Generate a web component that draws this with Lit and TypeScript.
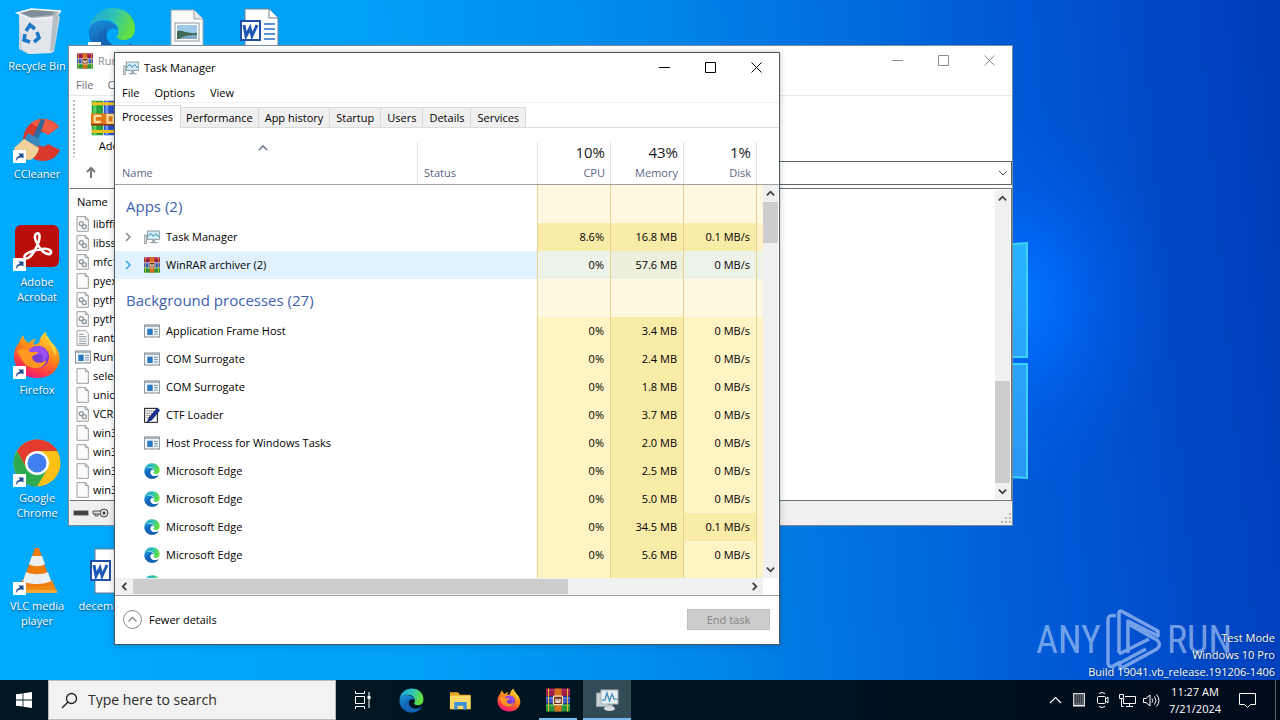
import { LitElement, html, css, svg, nothing } from "lit";
import { customElement, property } from "lit/decorators.js";
import { classMap } from "lit/directives/class-map.js";

type IconName = string;

const edgeArt = svg`
  <defs>
    <linearGradient id="e1" x1="0" y1="0" x2="1" y2="0.3"><stop offset="0" stop-color="#1f9fdc"/><stop offset="0.55" stop-color="#2fc3b8"/><stop offset="1" stop-color="#62e03e"/></linearGradient>
    <linearGradient id="e2" x1="0" y1="0" x2="0.4" y2="1"><stop offset="0" stop-color="#1c8fdc"/><stop offset="1" stop-color="#0a4f9e"/></linearGradient>
  </defs>
  <path d="M1 22C3 9 12 1 25 1C38 1 47 10 47 22C47 29 42 33 36 33C31 33 28 31 29 29C31 26 31 24 30 21C28 15 21 12 14 13C8 14 3 17 1 22Z" fill="url(#e1)"/>
  <path d="M1 23C3 16 10 12 18 14C25 15 30 19 30 24C29 20 21 20 19 26C17 33 23 40 31 40C37 40 41 38 44 36C40 43 33 47 25 47C11 47 0 37 1 23Z" fill="url(#e2)"/>
  <path d="M14 44C8 37 8 25 19 21C15 30 22 40 33 40C37 40 41 38 44 36C40 43 33 47 25 47C21 47 17 46 14 44Z" fill="#1464b8"/>`;

const rarArt = svg`
  <rect x="0" y="1" width="48" height="15" fill="#9c1c4c"/><rect x="0" y="17" width="48" height="14" fill="#3a58c4"/><rect x="0" y="32" width="48" height="15" fill="#2a9438"/>
  <path d="M0 4h48" stroke="#d84a78" stroke-width="1.500"/><path d="M0 20h48" stroke="#86a4f0" stroke-width="1.500"/><path d="M0 35h48" stroke="#74cc6c" stroke-width="1.500"/>
  <g fill="#e8b838"><rect x="4" y="1" width="2" height="46"/><rect x="42" y="1" width="2" height="46"/></g>
  <rect x="17" y="1" width="14" height="46" fill="#d8701c"/>
  <rect x="15" y="16" width="18" height="17" rx="2" fill="#6a2a10" stroke="#f8e4bc" stroke-width="2.500"/>
  <path d="M20 21v7h4v-6m0 6h4v-7" fill="none" stroke="#fff" stroke-width="2.500"/>`;

const foxArt = svg`
  <defs><linearGradient id="f1" x1="0.8" y1="0" x2="0.3" y2="1"><stop offset="0" stop-color="#ffe23e"/><stop offset="0.45" stop-color="#ff8a16"/><stop offset="0.8" stop-color="#ff3647"/><stop offset="1" stop-color="#e31587"/></linearGradient></defs>
  <path d="M6 12C7 9 9 6 10 4C11 8 13 11 16 12C18 9 21 8 23 8C21 10 20 12 21 14L26 12C27 7 29 3 33 1C33 6 36 9 40 13C45 18 48 25 46 32C43 42 35 47 24 47C11 47 1 38 1 25C1 20 3 15 6 12Z" fill="url(#f1)"/>
  <circle cx="25" cy="26" r="11" fill="#7a3bd6"/>
  <path d="M16 19C20 14 29 14 33 19C36 24 34 29 29 30C32 25 28 22 23 24C18 24 16 22 16 19Z" fill="#9a4df0"/>
  <path d="M4 20C9 16 14 17 17 21L25 21C24 24 20 24 19 26C20 32 27 34 33 29C33 36 24 39 17 36C11 34 8 27 4 20Z" fill="#ff9820"/>
  <path d="M34 4C34 12 41 16 42 25C44 20 42 15 38 11Z" fill="#ffd93a"/>`;

const docArt = svg`
  <path d="M7 2h28l10 9v35H7z" fill="#fafafa" stroke="#9aa4ae"/><path d="M35 2v9h10" fill="#e4e8ec" stroke="#9aa4ae"/>`;

const wordArt = svg`
  <path d="M7 2h24l9 9v35H7z" fill="#fff" stroke="#6f7f92"/><path d="M31 2v9h9" fill="#fff" stroke="#6f7f92"/>
  <path d="M26 17h11M26 22h11M26 27h11M26 32h11" stroke="#2b6cc8" stroke-width="1.6"/>
  <rect x="2" y="13" width="21" height="21" fill="#1f4fa8"/><rect x="4" y="15" width="17" height="17" fill="#fff"/>
  <path d="M6 18l2 11 4-8 2 8 5-11" fill="none" stroke="#1f57b8" stroke-width="3"/>`;

const tmArt = svg`
  <rect x="1" y="18" width="7" height="26" fill="#d8dde0" stroke="#8a949a" stroke-width="2"/>
  <rect x="10" y="6" width="36" height="25" fill="#d6ecf8" stroke="#7b8a94" stroke-width="2.5"/>
  <path d="M12 22l8-9 8 9 7-8 9 10" fill="none" stroke="#2888b4" stroke-width="3"/>
  <path d="M25 32h8v7h8v4H17v-4h8z" fill="#9aa6ae"/>`;

const ART: Record<IconName, unknown> = {
  edge: edgeArt,
  winrar: rarArt,
  firefox: foxArt,
  word: wordArt,
  taskmgr: tmArt,
  bin: svg`
    <path d="M6 7l34-3 7 6-6 35-26 2-9-5z" fill="#cfd5da" opacity="0.95"/><path d="M6 7l12 4 24-1-3 36-22 1-8-5z" fill="#e2e6ea"/>
    <path d="M4 6l14-4 30 2-6 6-24 2z" fill="#aab4bc" stroke="#f4f6f8" stroke-width="1.5"/><path d="M8 6l12-3 22 2-4 3-20 2z" fill="#7e8c98"/>
    <path d="M40 10l6-4-5 36-4 3z" fill="#b6bfc6"/>
    <g fill="none" stroke="#1f78c8" stroke-width="3.6"><path d="M13 24l4-6 5 4"/><path d="M24 25l2 6-5 4"/><path d="M17 35l-6-2 1-6"/></g>`,
  ccleaner: svg`
    <path d="M46 12C38 1 20 2 13 14C5 29 14 46 30 46C38 46 44 42 47 35L35 29C31 34 23 31 23 24C23 17 31 15 35 20Z" fill="#d8392c"/>
    <path d="M46 12C39 3 27 1 18 8L35 20Z" fill="#ee5a42"/>
    <path d="M28 4l4 1-7 20-6-1z" fill="#2d6a9a"/><path d="M15 18l13 7-3 7-14-7z" fill="#3a88bc"/>
    <path d="M11 24l15 9c-1 6-5 10-9 12C10 45 4 41 1 33z" fill="#f2d09a"/>`,
  acrobat: svg`
    <rect x="2" y="2" width="44" height="42" rx="6" fill="#b90f08"/>
    <path d="M23 11c4-3 5 4 1 12c-4 9-9 14-12 12c-3-4 8-8 17-9c8-1 11 3 8 5c-4 1-9-3-12-9c-3-5-4-9-2-11z" fill="none" stroke="#fff" stroke-width="2.6"/>`,
  chrome: svg`
    <circle cx="24" cy="24" r="23.500" fill="#fbc116"/>
    <path d="M4 12A23.500 23.500 0 0 1 44.500 12H24L14 30Z" fill="#e33b2e"/>
    <path d="M4 12A23.500 23.500 0 0 0 24 47.500L34.500 30L24 35L14 30Z" fill="#2da94f"/>
    <circle cx="24" cy="24" r="12" fill="#fff"/><circle cx="24" cy="24" r="9.500" fill="#3f7ff0"/>`,
  vlc: svg`
    <path d="M9 33h30l5 12H4z" fill="#f08a12"/><path d="M4 43h40v3H4z" fill="#f8a838"/>
    <path d="M22 1h4l12 36c-6 4-23 4-29 0z" fill="#f07c10"/><path d="M19 9h10l3 8c-4 3-12 3-16 0z" fill="#eceff1"/>
    <path d="M13 25c6 3 16 3 22 0l3 9c-6 4-23 4-28 0z" fill="#eceff1"/>`,
  image: svg`
    <path d="M8 3h23l9 9v34H8z" fill="#fafafa" stroke="#9aa4ae"/><path d="M31 3v9h9" fill="#e4e8ec" stroke="#9aa4ae"/>
    <rect x="12" y="16" width="24" height="18" fill="#fff" stroke="#8c98a4"/><rect x="14" y="18" width="20" height="14" fill="#9cc8e8"/>
    <path d="M14 24c6-1 10 3 20 2v6H14z" fill="#3f6a54"/><path d="M16 32c6-4 12-4 18-4v4z" fill="#7fa8c4"/>`,
  app: svg`
    <rect x="1" y="6" width="46" height="36" fill="#f4f7f9" stroke="#7c8890" stroke-width="3"/><rect x="2" y="6" width="44" height="6" fill="#a8b4bc"/>
    <rect x="10" y="17" width="16" height="19" fill="#2678c0"/><path d="M30 19h12M30 26h12M30 33h12" stroke="#6a8ea8" stroke-width="3"/>`,
  ctf: svg`
    <rect x="2" y="4" width="38" height="42" fill="#fff" stroke="#111" stroke-width="3"/>
    <path d="M8 12h26M8 19h20M8 26h16M8 33h10" stroke="#222" stroke-width="3" stroke-dasharray="3 3"/>
    <path d="M10 45L16 31L40 3L47 10L24 38Z" fill="#18309c" stroke="#081048" stroke-width="2"/>`,
  dll: svg`
    <path d="M6 2h26l8 9v35H6z" fill="#fbfbfb" stroke="#8c8c8c" stroke-width="2.500"/><path d="M31 2v9h9" fill="none" stroke="#8c8c8c" stroke-width="2.500"/>
    <circle cx="19" cy="23" r="6" fill="none" stroke="#8e979d" stroke-width="4"/><circle cx="28" cy="32" r="6" fill="none" stroke="#8e979d" stroke-width="4"/>`,
  file: svg`
    <path d="M6 2h26l8 9v35H6z" fill="#fbfbfb" stroke="#8c8c8c" stroke-width="2.500"/><path d="M31 2v9h9" fill="none" stroke="#8c8c8c" stroke-width="2.500"/>`,
  text: svg`
    <path d="M6 2h26l8 9v35H6z" fill="#fbfbfb" stroke="#8c8c8c" stroke-width="2.500"/>
    <path d="M12 13h14M12 20h22M12 27h22M12 34h22M12 41h22" stroke="#7c868c" stroke-width="2.500"/>`,
  folder: svg`
    <path d="M2 7h17l4 5h22v30H2z" fill="#e8a820"/><path d="M2 14h43v28H2z" fill="#ffd968"/>
    <path d="M11 27h26v16h-7v-8H18v8h-7z" fill="#3a92dc"/>`,
  books: svg`
    <rect x="1" y="1" width="15" height="46" fill="#28a038"/><rect x="3" y="1" width="4" height="46" fill="#5cd060"/>
    <rect x="17" y="1" width="15" height="46" fill="#2a50c8"/><rect x="19" y="1" width="4" height="46" fill="#6a90f0"/>
    <rect x="33" y="1" width="14" height="46" fill="#7a1a5c"/>
    <rect x="1" y="3" width="46" height="4" fill="#f0c020"/><rect x="1" y="40" width="46" height="4" fill="#f0c020"/>
    <rect x="0" y="18" width="48" height="14" fill="#e07818"/>
    <path d="M14 21H5v8h8M22 20h8v10h-8z" fill="none" stroke="#ffe0a0" stroke-width="3"/><path d="M0 33h48" stroke="#8a3a08" stroke-width="2"/>`,
  taskbarTm: svg`
    <rect x="3" y="10" width="24" height="27" fill="#c8d0d4" stroke="#98a4aa" stroke-width="2"/>
    <rect x="12" y="4" width="34" height="28" fill="#e6eef2" stroke="#a8b4ba" stroke-width="2"/>
    <path d="M14 24h6l4-14 5 16 5-14 4 10h7" fill="none" stroke="#3a8ab8" stroke-width="2.500"/>
    <path d="M22 33h14v4H22z" fill="#b0bac0"/><ellipse cx="29" cy="41" rx="11" ry="5" fill="#d4dade"/>`,
};

const icon = (name: IconName, size: number) =>
  html`<svg class="art" width=${size} height=${size} viewBox="0 0 48 48" aria-hidden="true">${ART[name]}</svg>`;

const chevron = (dir: "up" | "down" | "left" | "right", size = 9, color = "#404040", weight = 2) => {
  const d = {
    up: "M1 7l4-4 4 4",
    down: "M1 3l4 4 4-4",
    left: "M7 1L3 5l4 4",
    right: "M3 1l4 4-4 4",
  }[dir];
  return html`<svg class="art" width=${size} height=${size} viewBox="0 0 10 10" aria-hidden="true">
    <path d=${d} fill="none" stroke=${color} stroke-width=${weight}></path>
  </svg>`;
};

const windowButtons = () => html`
  <div class="controls">
    <button aria-label="Minimize"><svg width="11" height="11" viewBox="0 0 11 11"><path d="M0 5.500h11" stroke="currentColor" /></svg></button>
    <button aria-label="Maximize"><svg width="11" height="11" viewBox="0 0 11 11"><path d="M.5.5h10v10H.5z" fill="none" stroke="currentColor" /></svg></button>
    <button aria-label="Close"><svg width="11" height="11" viewBox="0 0 11 11"><path d="M.5.5l10 10M10.500.5l-10 10" stroke="currentColor" /></svg></button>
  </div>`;

const shared = css`
  :host {
    box-sizing: border-box;
    font-family: "Open Sans", "Noto Sans", sans-serif;
    font-size: 11px;
    line-height: 16px;
    color: #000;
  }
  *, *::before { box-sizing: border-box; }
  button, input {
    font: inherit;
    color: inherit;
    border: 0;
    padding: 0;
    margin: 0;
    background: none;
    border-radius: 0;
  }
  .art { display: block; flex: none; }
  .titlebar { display: flex; align-items: center; height: 30px; padding-left: 8px; gap: 5px; }
  .title { flex: 1; font-weight: 400; font-size: inherit; margin: 0; }
  .controls { display: flex; align-self: flex-start; height: 28px; }
  .controls button { width: 46px; display: flex; align-items: center; justify-content: center; }
`;

@customElement("winrar-window")
export class WinrarWindow extends LitElement {
  private files: [IconName, string][] = [
    ["dll", "libffi-7"], ["dll", "libssl-1"], ["dll", "mfc140"], ["file", "pyexpat"], ["dll", "python3"],
    ["dll", "python38"], ["text", "ranthe"], ["app", "Runtime"], ["file", "select"], ["file", "unicode"],
    ["dll", "VCRUN"], ["file", "win32a"], ["file", "win32e"], ["file", "win32p"], ["file", "win32u"],
  ];

  static styles = [shared, css`
    :host { display: flex; flex-direction: column; background: #fff; border: 1px solid #7a8a96; }
    .titlebar { color: #8c8c8c; height: 29px; }
    .menu { display: flex; gap: 14px; height: 21px; padding-left: 7px; color: #6d6d6d; align-items: center; border-bottom: 1px solid #e8e8e8; }
    .tools { display: flex; height: 65px; padding: 4px; }
    .grip { width: 2px; background: repeating-linear-gradient(#b8b8b8 0 2px, transparent 2px 4px); }
    .tool { display: flex; flex-direction: column; align-items: center; margin-left: 16px; gap: 2px; }
    .address { display: flex; align-items: flex-start; height: 27px; padding-left: 4px; }
    .up { width: 36px; height: 22px; display: flex; justify-content: center; align-items: center; margin-right: 12px; }
    .path { flex: 1; height: 24px; display: flex; align-items: center; justify-content: flex-end; border: 1px solid #5f6468; padding-right: 3px; }
    .list { flex: 1; min-height: 0; display: flex; border: 1px solid #6e7276; border-left: 0; margin-left: 1px; }
    .rows { flex: 1; margin: 0; padding: 0 0 0 5px; list-style: none; overflow: hidden; }
    .rows li { display: flex; align-items: center; gap: 2px; height: 19px; white-space: nowrap; }
    .rows .head { height: 25px; padding-left: 2px; }
    .bar { width: 15px; margin: 1px; display: flex; flex-direction: column; align-items: center; background: #f0f0f0; }
    .arrow { height: 16px; display: flex; align-items: center; }
    .space { flex: 1; }
    .thumb { width: 15px; height: 102px; background: #cdcdcd; }
    .status { display: flex; align-items: center; gap: 3px; height: 24px; padding-left: 4px; background: #f0f0f0; }
    .corner { align-self: flex-end; margin: 0 0 1px auto; }
  `];

  render() {
    return html`
      <header class="titlebar">${icon("winrar", 16)}<h2 class="title">Runtime</h2>${windowButtons()}</header>
      <nav class="menu"><button>File</button><button>Commands</button></nav>
      <div class="tools"><span class="grip"></span><button class="tool">${icon("books", 36)}<span>Add</span></button></div>
      <div class="address">
        <button class="up" aria-label="Up one level"><svg width="12" height="12" viewBox="0 0 12 12"><path d="M6 12V2M2 6l4-4 4 4" fill="none" stroke="#777" stroke-width="2" /></svg></button>
        <button class="path" aria-label="Folder list">${chevron("down", 10, "#555", 1)}</button>
      </div>
      <div class="list">
        <ul class="rows">
          <li class="head">Name</li>
          ${this.files.map(([i, n]) => html`<li>${icon(i, 16)}<span>${n}</span></li>`)}
        </ul>
        <div class="bar">
          <span class="arrow">${chevron("up", 9)}</span><span class="space"></span>
          <span class="thumb"></span><span class="arrow">${chevron("down", 9)}</span>
        </div>
      </div>
      <footer class="status">
        <svg width="16" height="16" viewBox="0 0 16 16"><rect x="0.500" y="5.500" width="15" height="5" rx="1" fill="#444" stroke="#aaa" /></svg>
        <svg width="17" height="16" viewBox="0 0 17 16"><circle cx="12" cy="8" r="4" fill="#ddd" stroke="#444" /><circle cx="12" cy="8" r="1.500" fill="#444" /><path d="M8 6H1v3h7M3 9v2h3V9" fill="#ddd" stroke="#555" /></svg>
        <svg class="corner" width="11" height="11" viewBox="0 0 11 11"><path d="M8 0h2v2H8zM8 4h2v2H8zM8 8h2v2H8zM4 4h2v2H4zM4 8h2v2H4zM0 8h2v2H0z" fill="#b4b4b4" /></svg>
      </footer>`;
  }
}

interface Proc {
  icon: IconName;
  name: string;
  cpu: string;
  mem: string;
  disk: string;
  open?: boolean;
  hover?: boolean;
}

@customElement("task-manager")
export class TaskManager extends LitElement {
  private tabs = ["Processes", "Performance", "App history", "Startup", "Users", "Details", "Services"];
  private apps: Proc[] = [
    { icon: "taskmgr", name: "Task Manager", cpu: "8.6%", mem: "16.8 MB", disk: "0.1 MB/s", open: true },
    { icon: "winrar", name: "WinRAR archiver (2)", cpu: "0%", mem: "57.6 MB", disk: "0 MB/s", open: true, hover: true },
  ];
  private background: Proc[] = [
    { icon: "app", name: "Application Frame Host", cpu: "0%", mem: "3.4 MB", disk: "0 MB/s" },
    { icon: "app", name: "COM Surrogate", cpu: "0%", mem: "2.4 MB", disk: "0 MB/s" },
    { icon: "app", name: "COM Surrogate", cpu: "0%", mem: "1.8 MB", disk: "0 MB/s" },
    { icon: "ctf", name: "CTF Loader", cpu: "0%", mem: "3.7 MB", disk: "0 MB/s" },
    { icon: "app", name: "Host Process for Windows Tasks", cpu: "0%", mem: "2.0 MB", disk: "0 MB/s" },
    { icon: "edge", name: "Microsoft Edge", cpu: "0%", mem: "2.5 MB", disk: "0 MB/s" },
    { icon: "edge", name: "Microsoft Edge", cpu: "0%", mem: "5.0 MB", disk: "0 MB/s" },
    { icon: "edge", name: "Microsoft Edge", cpu: "0%", mem: "34.5 MB", disk: "0.1 MB/s" },
    { icon: "edge", name: "Microsoft Edge", cpu: "0%", mem: "5.6 MB", disk: "0 MB/s" },
    { icon: "edge", name: "", cpu: "", mem: "", disk: "" },
  ];

  static styles = [shared, css`
    :host { display: flex; flex-direction: column; background: #fff; border: 1px solid #4c5a64; box-shadow: 0 0 6px rgba(0, 0, 0, 0.25); }
    .menu { display: flex; gap: 15px; height: 20px; padding-left: 7px; align-items: center; border-bottom: 1px solid #efefef; }
    .tabs { display: flex; align-items: flex-end; height: 25px; border-bottom: 1px solid #dcdcdc; }
    .tab { height: 20px; padding: 0 5px; background: #f0f0f0; border: solid #d9d9d9; border-width: 1px 1px 0 0; line-height: 19px; }
    .tab:nth-child(n + 3) { padding: 0 6px; }
    .tab.active { height: 23px; padding: 0 7px; background: #fff; margin-bottom: -1px; line-height: 20px; }
    .view { flex: 1; min-height: 0; display: flex; overflow: hidden; }
    .clip { flex: 1; overflow: hidden; }
    table { width: 100%; border-collapse: separate; border-spacing: 0; table-layout: fixed; }
    .c-status { width: 120px; }
    .c-num { width: 73px; }
    .c-tail { width: 6px; }
    th, td { padding: 0; font-weight: 400; text-align: left; overflow: hidden; white-space: nowrap; }
    thead th { height: 57px; vertical-align: bottom; color: #5b6785; border-bottom: 1px solid #a0a0a0; padding-bottom: 3px;
      background: linear-gradient(#e2e2e2, #e2e2e2) right bottom / 1px 42px no-repeat; }
    thead .first { padding-left: 7px; }
    thead .status { padding-left: 6px; }
    thead .tail, tbody .tail { background: none; }
    .sort { display: flex; justify-content: center; height: 22px; padding-right: 15px; }
    .num { text-align: right; padding-right: 6px; }
    .total { display: block; font-size: 15px; line-height: 26px; color: #1a1a1a; }
    tbody td { height: 28px; }
    tbody .num { border-right: 1px solid #e6d28c; }
    tbody .before { border-right: 1px solid #e6d28c; }
    .group th, .group td { height: 38px; }
    .group th { padding: 4px 0 0 11px; font-size: 15px; color: #3d62b0; vertical-align: middle; }
    .group .num, .group .tail { background: #fff8e1; }
    .low { background: #fff4c4; }
    .mid { background: #f9eba8; }
    tbody .tail.low { background: #fff4c4; }
    .hover td { background: #e1f1fd; }
    .hover .low, tbody .hover .tail.low { background: #edf3e8; }
    .hover .mid { background: #ecf0dc; }
    .proc { display: flex; align-items: center; padding-left: 7px; }
    .caret { width: 12px; margin-right: 10px; display: flex; justify-content: center; }
    .name { margin-left: 6px; }
    .side { width: 16px; display: flex; flex-direction: column; }
    .side .top { height: 57px; border-bottom: 1px solid #a0a0a0; }
    .vbar { flex: 1; width: 15px; display: flex; flex-direction: column; align-items: center; background: #f0f0f0; }
    .arrow { height: 17px; display: flex; align-items: center; }
    .thumb { width: 15px; height: 41px; background: #cdcdcd; }
    .space { flex: 1; }
    .hbar { display: flex; align-items: center; height: 17px; margin-right: 16px; background: #f0f0f0; }
    .hbar .cell { width: 18px; display: flex; justify-content: center; }
    .hbar .track { flex: 1; align-self: stretch; padding: 1px 0; }
    .hbar .hthumb { width: 71%; height: 15px; background: #cdcdcd; }
    footer { display: flex; align-items: center; justify-content: space-between; height: 49px; border-top: 1px solid #a0a0a0; padding: 0 9px 1px 7px; }
    .fewer { display: flex; align-items: center; gap: 6px; }
    .end { width: 83px; height: 21px; background: #cccccc; border: 1px solid #bfbfbf; color: #838383; }
  `];

  private group(label: string) {
    return html`<tr class="group"><th scope="rowgroup">${label}</th><td class="before"></td><td class="num"></td><td class="num"></td><td class="num"></td><td class="tail"></td></tr>`;
  }

  private row(p: Proc) {
    const busy = p.cpu === "8.6%";
    const disk = p.disk.startsWith("0.1");
    return html`<tr class=${classMap({ hover: !!p.hover })}>
      <td><div class="proc"><span class="caret">${p.open ? chevron("right", 10, p.hover ? "#35a8e8" : "#8a8a8a", 1.5) : nothing}</span>${icon(p.icon, 16)}<span class="name">${p.name}</span></div></td>
      <td class="before"></td>
      <td class=${classMap({ num: true, low: !busy, mid: busy })}>${p.cpu}</td>
      <td class="num mid">${p.mem}</td>
      <td class=${classMap({ num: true, low: !disk, mid: disk })}>${p.disk}</td>
      <td class="tail low"></td>
    </tr>`;
  }

  render() {
    return html`
      <header class="titlebar">${icon("taskmgr", 16)}<h1 class="title">Task Manager</h1>${windowButtons()}</header>
      <nav class="menu"><button>File</button><button>Options</button><button>View</button></nav>
      <div class="tabs" role="tablist">
        ${this.tabs.map((t, i) => html`<button role="tab" aria-selected=${i === 0} class=${classMap({ tab: true, active: i === 0 })}>${t}</button>`)}
      </div>
      <div class="view">
        <div class="clip">
          <table>
            <colgroup><col /><col class="c-status" /><col class="c-num" /><col class="c-num" /><col class="c-num" /><col class="c-tail" /></colgroup>
            <thead><tr>
              <th class="first"><span class="sort">${chevron("up", 10, "#5b6785", 1.3)}</span>Name</th>
              <th class="status">Status</th>
              <th class="num"><span class="total">10%</span>CPU</th>
              <th class="num"><span class="total">43%</span>Memory</th>
              <th class="num"><span class="total">1%</span>Disk</th>
              <th class="tail"></th>
            </tr></thead>
            <tbody>
              ${this.group("Apps (2)")}${this.apps.map((p) => this.row(p))}
              ${this.group("Background processes (27)")}${this.background.map((p) => this.row(p))}
            </tbody>
          </table>
        </div>
        <div class="side">
          <span class="top"></span>
          <div class="vbar"><span class="arrow">${chevron("up", 9)}</span><span class="thumb"></span><span class="space"></span><span class="arrow">${chevron("down", 9)}</span></div>
        </div>
      </div>
      <div class="hbar"><span class="cell">${chevron("left", 9)}</span><span class="track"><div class="hthumb"></div></span><span class="cell">${chevron("right", 9)}</span></div>
      <footer>
        <button class="fewer"><svg width="21" height="21" viewBox="0 0 21 21"><circle cx="10.500" cy="10.500" r="9" fill="none" stroke="#8a8a8a" /><path d="M6.500 12.500l4-4 4 4" fill="none" stroke="#8a8a8a" stroke-width="1.300" /></svg>Fewer details</button>
        <button class="end" disabled>End task</button>
      </footer>`;
  }
}

@customElement("desktop-icon")
export class DesktopIcon extends LitElement {
  @property() name = "";
  @property() label = "";
  @property({ type: Boolean }) shortcut = false;

  static styles = [shared, css`
    :host { display: block; }
    .item { position: relative; width: 74px; display: flex; flex-direction: column; align-items: center; gap: 3px; color: #fff; line-height: 15px; }
    .label { text-shadow: 0 1px 2px rgba(0, 0, 0, 0.6); width: 64px; text-align: center; display: flex; justify-content: center; }
    .link { position: absolute; left: 13px; top: 35px; }
  `];

  render() {
    return html`<button class="item">
      ${icon(this.name, 48)}
      ${this.shortcut ? html`<svg class="link" width="13" height="13" viewBox="0 0 13 13"><rect width="13" height="13" fill="#fff" /><path d="M3 11c0-4 2-5 4-5L5.500 3.500h5v5L9 7.500C6 7 5 8 3 11z" fill="#1e4f94" /></svg>` : nothing}
      <span class="label">${this.label}</span>
    </button>`;
  }
}

@customElement("task-bar")
export class TaskBar extends LitElement {
  static styles = [shared, css`
    :host { display: flex; align-items: stretch; height: 40px; background: linear-gradient(90deg, #001720, #001422 60%, #000a1a); color: #fff; }
    .start { width: 48px; display: flex; align-items: center; justify-content: center; }
    .search { width: 288px; display: flex; align-items: center; gap: 10px; padding-left: 12px; background: #f2f2f2; border: 1px solid #b8b8b8; color: #1c1c1c; }
    .search input { flex: 1; min-width: 0; font-size: 14px; outline: 0; }
    .search input::placeholder { color: #2c2c2c; opacity: 1; }
    .apps { display: flex; gap: 1px; padding-left: 2px; }
    .apps button { width: 48px; display: flex; align-items: center; justify-content: center; }
    .open { background: linear-gradient(#76b9ed, #76b9ed) center bottom / 38px 2px no-repeat; }
    .apps .current { background: linear-gradient(#76b9ed, #76b9ed) center bottom / 48px 2px no-repeat #334a57; }
    .tray { margin-left: auto; display: flex; align-items: center; }
    .tray button { width: 24px; height: 40px; display: flex; align-items: center; justify-content: center; }
    .tray .clock { width: 64px; line-height: 17px; white-space: nowrap; flex-direction: column; }
    .tray .note { width: 40px; }
    .peek { width: 5px; height: 40px; border-left: 1px solid #5c6670; margin-left: 8px; }
  `];

  render() {
    return html`
      <button class="start" aria-label="Start"><svg width="16" height="16" viewBox="0 0 16 16" fill="#fff"><path d="M0 2.300L6.600 1.400V7.600H0zM7.400 1.300L16 0V7.600H7.400zM0 8.400h6.600v6.200L0 13.700zM7.400 8.400H16V16l-8.600-1.300z" /></svg></button>
      <label class="search">
        <svg width="17" height="17" viewBox="0 0 17 17"><circle cx="10.500" cy="6.500" r="5" fill="none" stroke="#222" stroke-width="1.300" /><path d="M7 10L1 16" stroke="#222" stroke-width="1.400" /></svg>
        <input type="text" placeholder="Type here to search" aria-label="Search" />
      </label>
      <div class="apps">
        <button aria-label="Task View"><svg width="17" height="18" viewBox="0 0 17 18" fill="none" stroke="#fff"><path d="M1.500 5.500h9v7h-9zM1.500 0v2.500h9V0M1.500 18v-2.500h9V18M15 1v16" /><path d="M13.500 5h3v3h-3z" fill="#fff" stroke="none" /></svg></button>
        <button aria-label="Microsoft Edge">${icon("edge", 25)}</button>
        <button aria-label="File Explorer">${icon("folder", 23)}</button>
        <button aria-label="Firefox">${icon("firefox", 24)}</button>
        <button class="open" aria-label="WinRAR">${icon("winrar", 24)}</button>
        <button class="current" aria-label="Task Manager">${icon("taskbarTm", 24)}</button>
      </div>
      <div class="tray">
        <button aria-label="Show hidden icons"><svg width="13" height="8" viewBox="0 0 13 8"><path d="M1 7l5.500-5.500L12 7" fill="none" stroke="#fff" stroke-width="1.200" /></svg></button>
        <button aria-label="Device"><svg width="12" height="14" viewBox="0 0 12 14"><rect x="0.500" y="0.500" width="11" height="12" fill="#5c6268" stroke="#d8d8d8" /><path d="M2 3h8M2 5h8M2 7h8M2 9h8" stroke="#0a1420" stroke-dasharray="1 1" /><path d="M0 13h12" stroke="#fff" /></svg></button>
        <button aria-label="Camera"><svg width="14" height="18" viewBox="0 0 14 18" fill="none" stroke="#fff"><rect x="1.500" y="5.500" width="8" height="7" rx="1" /><path d="M9.500 8l2.500-2v6L9.500 10M3 2.500q3-2 6 0M3 15.500q3 2 6 0" /></svg></button>
        <button aria-label="Network"><svg width="17" height="15" viewBox="0 0 17 15" fill="none" stroke="#fff"><path d="M6 3.500h10.500v7H4.500V6M10.500 10.500v3M7 13.500h7M.5 1.500h4v4h-4zM2.500 5.500v8h2" /></svg></button>
        <button aria-label="Volume"><svg width="17" height="15" viewBox="0 0 17 15" fill="none" stroke="#fff"><path d="M.5 5.500h2.500L7 2v11L3 9.500H.5zM9 5.500q1.500 2 0 4M11.500 3.500q3 4 0 8M13.500 1.500q5 6 0 12" /></svg></button>
        <button class="clock"><span>11:27 AM</span><span>7/21/2024</span></button>
        <button class="note" aria-label="Notifications"><svg width="17" height="17" viewBox="0 0 17 17"><path d="M.5 1.500h16v11h-5l-3 3-3-3h-5z" fill="none" stroke="#fff" /></svg></button>
        <span class="peek"></span>
      </div>`;
  }
}

@customElement("app-root")
export class AppRoot extends LitElement {
  private columns: [IconName, string, boolean][][] = [
    [["bin", "Recycle Bin", false], ["ccleaner", "CCleaner", true], ["acrobat", "Adobe Acrobat", true], ["firefox", "Firefox", true], ["chrome", "Google Chrome", true], ["vlc", "VLC media player", true]],
    [["edge", "", true]],
    [["image", "", false]],
    [["word", "", false]],
  ];

  static styles = [shared, css`
    :host { display: flex; flex-direction: column; height: 100vh; overflow: hidden; background: #0078d7; }
    .desktop { position: relative; flex: 1; min-height: 0; overflow: hidden; }
    .wallpaper { position: absolute; inset: 0; width: 100%; height: calc(100% + 40px); }
    .icons { position: relative; display: grid; grid-template-columns: repeat(4, 75px); grid-auto-rows: 108px; padding-top: 7px; }
    .winrar { position: absolute; left: 68px; top: 45px; width: 945px; height: 481px; }
    .manager { position: absolute; left: 114px; top: 52px; width: 666px; height: 593px; }
    .brand { position: absolute; right: 48px; bottom: 9px; display: flex; align-items: center; gap: 5px; color: rgba(190, 212, 250, 0.62);
      font-family: "Liberation Sans Narrow", "Roboto Condensed", "DejaVu Sans Condensed", sans-serif; font-size: 38px; line-height: 62px; }
    .build { position: absolute; right: 5px; bottom: 0; margin: 0; color: #fff; text-align: right; line-height: 17px; text-shadow: 0 0 2px rgba(0, 0, 0, 0.6); }
  `];

  render() {
    return html`
      <main class="desktop">
        <svg class="wallpaper" viewBox="0 0 1280 720" preserveAspectRatio="xMidYMid slice" aria-hidden="true">
          <defs>
            <linearGradient id="sky" x1="0" y1="0.05" x2="1" y2="0">
              <stop offset="0" stop-color="#00aafc" /><stop offset="0.3" stop-color="#009ef6" /><stop offset="0.5" stop-color="#0088ea" />
              <stop offset="0.64" stop-color="#0070de" /><stop offset="0.8" stop-color="#0056d4" /><stop offset="1" stop-color="#003ab6" />
            </linearGradient>
            <radialGradient id="glow"><stop offset="0" stop-color="#0078ff" /><stop offset="0.35" stop-color="#0068fa" stop-opacity="0.7" /><stop offset="1" stop-color="#0058e0" stop-opacity="0" /></radialGradient>
            <linearGradient id="pane" x1="0" y1="0" x2="0" y2="1"><stop offset="0" stop-color="#28b4ff" /><stop offset="1" stop-color="#2a96f4" /></linearGradient>
          </defs>
          <rect width="1280" height="720" fill="url(#sky)" />
          <ellipse cx="1020" cy="300" rx="150" ry="190" fill="url(#glow)" />
          <path d="M900 252L1027 243V357H900zM900 364H1027V478L900 470z" fill="url(#pane)" stroke="#3cd4ff" stroke-width="2" />
        </svg>
        <div class="icons">
          ${this.columns.map((col, c) => col.map(([n, l, s], r) => html`<desktop-icon style="grid-area: ${r + 1} / ${c + 1}" .name=${n} .label=${l} .shortcut=${s}></desktop-icon>`))}
          <desktop-icon style="grid-area: 6 / 2" .name=${"word"} .label=${"december.rtf"}></desktop-icon>
        </div>
        <winrar-window class="winrar"></winrar-window>
        <task-manager class="manager"></task-manager>
        <div class="brand"><span>ANY</span>
          <svg width="56" height="62" viewBox="0 0 56 62" fill="none" stroke="currentColor" stroke-width="3.500" stroke-linejoin="round"><path d="M10 7Q2 5 2 11V54Q3 60 9 56L14 53M13 44V3Q14 1 17 3L52 22V27L22 12V44M13 45L43 30M14 60L51 40Q56 35 51 31L24 16M14 60V54L40 40" /></svg>
          <span>RUN</span></div>
        <p class="build">Test Mode<br />Windows 10 Pro<br />Build 19041.vb_release.191206-1406</p>
      </main>
      <task-bar></task-bar>`;
  }
}
